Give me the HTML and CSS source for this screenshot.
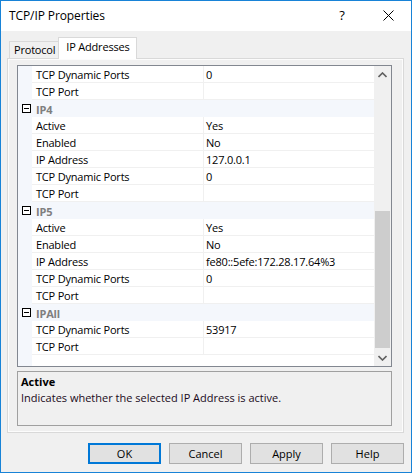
FILE: index.html
```html
<!DOCTYPE html>
<html>
<head>
<meta charset="utf-8">
<link rel="stylesheet" href="styles.css">
</head>
<body>
<div class="window">
  <div class="titlebar">
    <span class="title">TCP/IP Properties</span>
    <span class="help-btn">?</span>
    <span class="close-btn">
      <svg width="11" height="11" viewBox="0 0 11 11"><path d="M0.5 0.5 L10.5 10.5 M10.5 0.5 L0.5 10.5" stroke="#000" stroke-width="1" fill="none"/></svg>
    </span>
  </div>
  <div class="content">
    <div class="tabs">
      <div class="tab">Protocol</div>
      <div class="tab active">IP Addresses</div>
    </div>
    <div class="panel">
      <div class="grid">
        <div class="rows">
          <div class="row"><div class="gut"></div><div class="name">TCP Dynamic Ports</div><div class="val">0</div></div>
          <div class="row"><div class="gut"></div><div class="name">TCP Port</div><div class="val"></div></div>
          <div class="row cat"><div class="gut"><span class="minus"></span></div><div class="catname">IP4</div></div>
          <div class="row"><div class="gut"></div><div class="name">Active</div><div class="val">Yes</div></div>
          <div class="row"><div class="gut"></div><div class="name">Enabled</div><div class="val">No</div></div>
          <div class="row"><div class="gut"></div><div class="name">IP Address</div><div class="val">127.0.0.1</div></div>
          <div class="row"><div class="gut"></div><div class="name">TCP Dynamic Ports</div><div class="val">0</div></div>
          <div class="row"><div class="gut"></div><div class="name">TCP Port</div><div class="val"></div></div>
          <div class="row cat"><div class="gut"><span class="minus"></span></div><div class="catname">IP5</div></div>
          <div class="row"><div class="gut"></div><div class="name">Active</div><div class="val">Yes</div></div>
          <div class="row"><div class="gut"></div><div class="name">Enabled</div><div class="val">No</div></div>
          <div class="row"><div class="gut"></div><div class="name">IP Address</div><div class="val">fe80::5efe:172.28.17.64%3</div></div>
          <div class="row"><div class="gut"></div><div class="name">TCP Dynamic Ports</div><div class="val">0</div></div>
          <div class="row"><div class="gut"></div><div class="name">TCP Port</div><div class="val"></div></div>
          <div class="row cat"><div class="gut"><span class="minus"></span></div><div class="catname">IPAll</div></div>
          <div class="row"><div class="gut"></div><div class="name">TCP Dynamic Ports</div><div class="val">53917</div></div>
          <div class="row"><div class="gut"></div><div class="name">TCP Port</div><div class="val"></div></div>
          <div class="filler"><div class="gut"></div></div>
        </div>
        <div class="scrollbar">
          <div class="arrow">
            <svg width="9" height="6" viewBox="0 0 9 6"><path d="M0.5 5 L4.5 1 L8.5 5" stroke="#606060" stroke-width="1.6" fill="none"/></svg>
          </div>
          <div class="track"><div class="thumb"></div></div>
          <div class="arrow">
            <svg width="9" height="6" viewBox="0 0 9 6"><path d="M0.5 1 L4.5 5 L8.5 1" stroke="#606060" stroke-width="1.6" fill="none"/></svg>
          </div>
        </div>
      </div>
      <div class="desc">
        <div class="desc-title">Active</div>
        <div class="desc-text">Indicates whether the selected IP Address is active.</div>
      </div>
    </div>
    <div class="buttons">
      <div class="btn default">OK</div>
      <div class="btn">Cancel</div>
      <div class="btn">Apply</div>
      <div class="btn">Help</div>
    </div>
  </div>
</div>
</body>
</html>
```
FILE: styles.css
```css
* { box-sizing: border-box; }
html, body { margin: 0; padding: 0; }
body {
  font-family: "Open Sans", "Noto Sans", sans-serif;
  font-size: 11px;
  letter-spacing: -0.2px;
  color: #000;
  background: #fff;
}
.window {
  width: 412px;
  height: 473px;
  border: 1px solid #1883d7;
  background: #f0f0f0;
  display: flex;
  flex-direction: column;
}
.titlebar {
  height: 30px;
  background: #fff;
  display: flex;
  align-items: center;
  padding-left: 8px;
  flex-shrink: 0;
}
.title {
  font-size: 12px;
  letter-spacing: -0.1px;
  flex: 1;
  padding-bottom: 1px;
}
.help-btn {
  font-size: 13px;
  width: 46px;
  text-align: center;
  padding-bottom: 2px;
}
.close-btn {
  width: 46px;
  height: 30px;
  display: flex;
  align-items: center;
  justify-content: center;
  padding-bottom: 2px;
}
.content {
  padding: 6px 7px 0 6px;
  display: flex;
  flex-direction: column;
}
.tabs {
  display: flex;
  align-items: flex-end;
  height: 21px;
  padding-left: 2px;
}
.tab {
  height: 17px;
  border: 1px solid #d9d9d9;
  border-bottom: none;
  padding: 0 3px 0 4px;
  line-height: 15px;
  background: #f0f0f0;
}
.tab.active {
  height: 22px;
  background: #fff;
  padding: 0 7px;
  line-height: 17px;
  margin-bottom: -1px;
  margin-left: -1px;
  position: relative;
  z-index: 1;
}
.panel {
  border: 1px solid #d9d9d9;
  box-shadow: inset 0 0 0 1px #fcfcfc;
  padding: 6px 11px 6px 9px;
  display: flex;
  flex-direction: column;
  gap: 4px;
}
.grid {
  border: 1px solid #828790;
  height: 302px;
  display: flex;
  background: #fff;
}
.rows {
  flex: 1;
  display: flex;
  flex-direction: column;
}
.row {
  height: 17px;
  display: flex;
}
.gut {
  width: 14px;
  background: #f4f7fc;
  flex-shrink: 0;
  display: flex;
  align-items: center;
  justify-content: center;
}
.name {
  width: 172px;
  border-right: 1px solid #f0f0f0;
  border-bottom: 1px solid #f0f0f0;
  padding: 1px 0 0 4px;
  line-height: 16px;
  white-space: nowrap;
}
.val {
  flex: 1;
  border-bottom: 1px solid #f0f0f0;
  padding: 1px 0 0 2px;
  line-height: 16px;
  white-space: nowrap;
}
.cat .catname {
  flex: 1;
  background: #f4f7fc;
  color: #7f7f7f;
  font-weight: 700;
  padding: 1px 0 0 4px;
  line-height: 17px;
}
.minus {
  width: 9px;
  height: 9px;
  border: 1px solid #000;
  background: #fff;
  position: relative;
  margin-left: 3px;
}
.minus::after {
  content: "";
  position: absolute;
  left: 1px;
  right: 1px;
  top: 3px;
  height: 1px;
  background: #000;
}
.filler {
  flex: 1;
  display: flex;
}
.scrollbar {
  width: 17px;
  background: #f0f0f0;
  display: flex;
  flex-direction: column;
}
.arrow {
  height: 17px;
  display: flex;
  align-items: center;
  justify-content: center;
}
.track {
  flex: 1;
  display: flex;
  flex-direction: column;
  justify-content: flex-end;
  padding: 0 1px;
}
.thumb {
  height: 137px;
  margin-bottom: 1px;
  background: #cdcdcd;
}
.desc {
  border: 1px solid #a0a0a0;
  height: 55px;
  padding: 2px 3px;
  color: #1a0a1a;
  letter-spacing: 0;
}
.desc-title {
  font-weight: 700;
  line-height: 16px;
  color: #000;
}
.desc-text {
  line-height: 16px;
}
.buttons {
  display: flex;
  justify-content: flex-end;
  gap: 8px;
  margin-top: 10px;
}
.btn {
  width: 73px;
  height: 21px;
  border: 1px solid #adadad;
  background: #e1e1e1;
  text-align: center;
  line-height: 19px;
  letter-spacing: 0;
}
.btn.default {
  border: 2px solid #0078d7;
  line-height: 17px;
}
```
